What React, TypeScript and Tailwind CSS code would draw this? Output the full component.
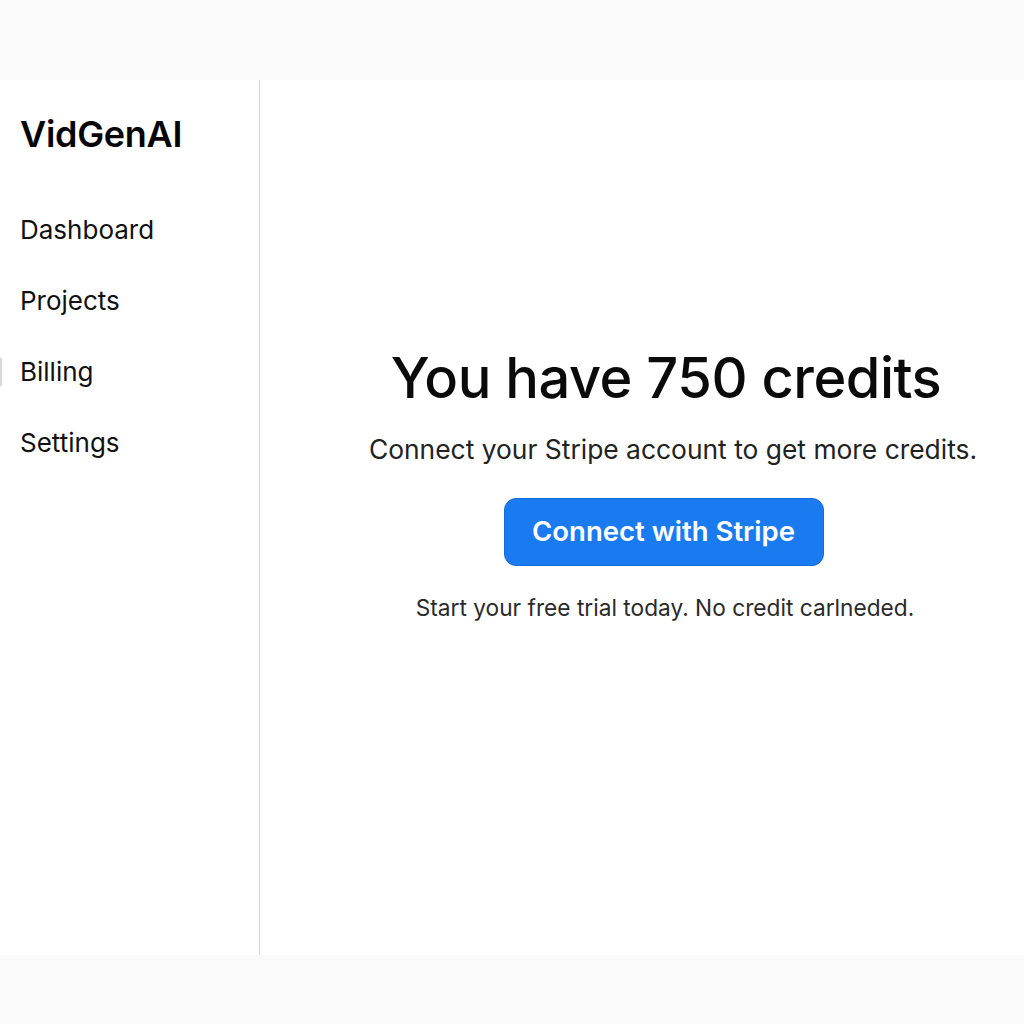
export default function App() {
  const nav = ['Dashboard', 'Projects', 'Billing', 'Settings'];

  return (
    <div
      className="flex h-[1024px] w-[1024px] flex-col bg-[#fafafa] text-[#111]"
      style={{ fontFamily: 'Inter, "Noto Sans", sans-serif' }}
    >
      <div className="h-[80px] shrink-0" />
      <div className="flex h-[875px] shrink-0 bg-white">
        <aside className="relative w-[260px] shrink-0 border-r border-[#d6d6d6] pl-[20px] pt-[30px]">
          <div className="text-[36px] font-semibold leading-[48px] tracking-[-0.3px] text-[#050505]">
            VidGenAI
          </div>
          <nav className="mt-[50px] flex flex-col">
            {nav.map((item) => (
              <div key={item} className="relative h-[71px] text-[26px] leading-[44px] text-[#111]">
                {item === 'Billing' && (
                  <span className="absolute left-[-20px] top-[8px] h-[28px] w-[2px] bg-[#d9d9d9]" />
                )}
                {item}
              </div>
            ))}
          </nav>
        </aside>
        <main className="flex flex-1 flex-col items-center pl-[46px] pt-[262px]">
          <h1 className="ml-[2px] text-[56px] font-medium leading-[72px] tracking-[-0.5px] text-[#0a0a0a]">
            You have 750 credits
          </h1>
          <p className="ml-[16px] mt-[17px] text-[26.4px] leading-[36px] text-[#222]">
            Connect your Stripe account to get more credits.
          </p>
          <button className="mr-[3px] mt-[31px] h-[68px] w-[320px] rounded-[12px] border border-[#166ad6] bg-[#1a7bf0] text-[27.5px] font-semibold text-white">
            Connect with Stripe
          </button>
          <p className="mt-[27px] text-[22.7px] leading-[30px] text-[#2a2a2a]">
            Start your free trial today. No credit carlneded.
          </p>
        </main>
      </div>
    </div>
  );
}
